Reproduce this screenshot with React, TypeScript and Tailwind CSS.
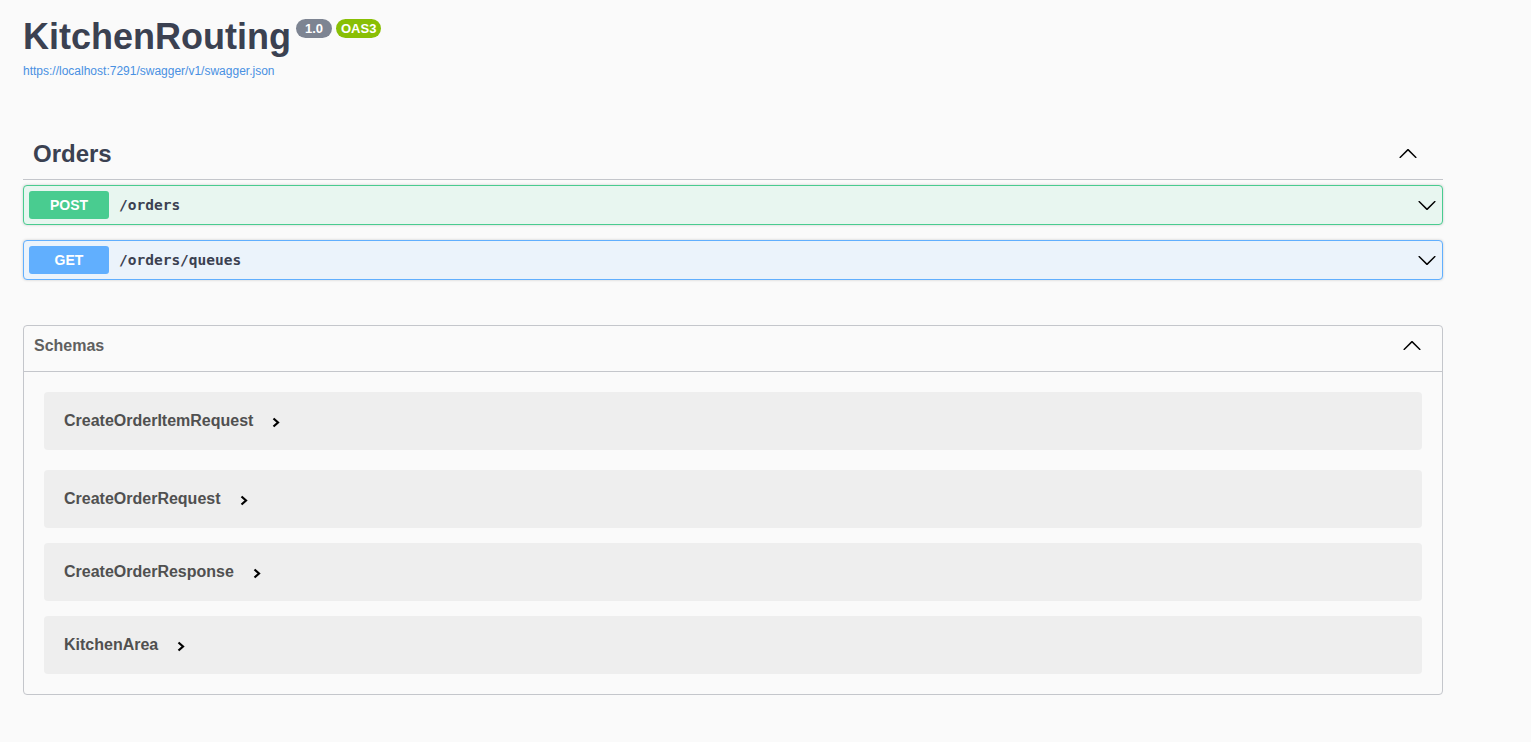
import React from "react";

const ArrowDown = ({ className = "" }: { className?: string }) => (
  <svg viewBox="0 0 20 20" width="20" height="20" className={className} fill="#000">
    <path d="M17.418 6.109c.272-.268.709-.268.979 0s.271.701 0 .969l-7.908 7.83c-.27.268-.707.268-.979 0l-7.908-7.83c-.27-.268-.27-.701 0-.969.271-.268.709-.268.979 0L10 13.25l7.418-7.141z" />
  </svg>
);

const ArrowUp = ({ className = "" }: { className?: string }) => (
  <svg viewBox="0 0 20 20" width="20" height="20" className={className} fill="#000">
    <path
      transform="rotate(180 10 10)"
      d="M17.418 6.109c.272-.268.709-.268.979 0s.271.701 0 .969l-7.908 7.83c-.27.268-.707.268-.979 0l-7.908-7.830c-.27-.268-.27-.701 0-.969.271-.268.709-.268.979 0L10 13.25l7.418-7.141z"
    />
  </svg>
);

const SmallChevron = () => (
  <svg viewBox="0 0 8 11" width="8" height="11" className="shrink-0">
    <polyline points="1.5,1.5 6,5.5 1.5,9.5" fill="none" stroke="#000" strokeWidth="2.2" strokeLinejoin="miter" />
  </svg>
);

function Op({ method, path, kind }: { method: string; path: string; kind: "post" | "get" }) {
  const box =
    kind === "post"
      ? "border-[#49cc90] bg-[#e8f6f0]"
      : "border-[#61affe] bg-[#ebf3fb]";
  const badge = kind === "post" ? "bg-[#49cc90]" : "bg-[#61affe]";
  return (
    <div className={`flex h-[40px] items-center rounded-[4px] border px-[5px] shadow-[0_0_3px_rgba(0,0,0,0.19)] ${box}`}>
      <div className={`flex h-[28px] w-[80px] items-center justify-center rounded-[3px] text-[14px] font-bold text-white ${badge}`}>
        {method}
      </div>
      <div className="ml-[10px] mt-[1px] flex-1 text-[14.5px] font-bold text-[#3b4151]" style={{ fontFamily: '"DejaVu Sans Mono", monospace' }}>
        {path}
      </div>
      <ArrowDown />
    </div>
  );
}

function Model({ name, mb }: { name: string; mb: string }) {
  return (
    <div className={`flex h-[58px] items-center rounded-[4px] bg-[#eeeeee] pl-[20px] ${mb}`}>
      <span className="text-[16px] font-bold text-[#505050]">{name}</span>
      <span className="ml-[19px] mt-[2px] flex">
        <SmallChevron />
      </span>
    </div>
  );
}

export default function App() {
  return (
    <div className="min-h-[742px] w-full bg-[#fafafa] text-[#3b4151]" style={{ fontFamily: '"Liberation Sans", Arial, sans-serif' }}>
      <div className="ml-[23px] w-[1420px]">
        {/* Info */}
        <div className="pt-[17px]">
          <div className="flex items-start">
            <h1 className="text-[36px] font-bold leading-[40px] text-[#3b4151]">KitchenRouting</h1>
            <div className="ml-[5px] mt-[2px] flex items-center gap-[4px]">
              <span className="flex h-[19px] w-[36px] items-center justify-center rounded-full bg-[#7d8492] text-[13px] font-bold text-white">
                1.0
              </span>
              <span className="flex h-[19px] items-center rounded-full bg-[#89bf04] px-[5px] text-[13px] font-bold text-white">
                OAS3
              </span>
            </div>
          </div>
          <div className="mt-[7px] text-[12px] leading-[14px] text-[#4990e2]">
            <a>https://localhost:7291/swagger/v1/swagger.json</a>
          </div>
        </div>

        {/* Orders */}
        <div className="mt-[51px]">
          <div className="flex h-[51px] items-center border-b border-[#c4c6cb] pl-[10px] pr-[25px]">
            <h3 className="flex-1 text-[24px] font-bold text-[#3b4151]">Orders</h3>
            <ArrowUp />
          </div>
          <div className="mt-[5px] flex flex-col gap-[15px]">
            <Op method="POST" path="/orders" kind="post" />
            <Op method="GET" path="/orders/queues" kind="get" />
          </div>
        </div>

        {/* Schemas */}
        <div className="mt-[45px] rounded-[4px] border border-[#c4c6cb]">
          <div className="flex h-[46px] items-center border-b border-[#c4c6cb] pl-[10px] pr-[20px]">
            <h4 className="-mt-[6px] flex-1 text-[16px] font-bold text-[#606060]">Schemas</h4>
            <ArrowUp className="-mt-[5px]" />
          </div>
          <div className="px-[20px] pt-[20px] pb-[20px]">
            <Model name="CreateOrderItemRequest" mb="mb-[20px]" />
            <Model name="CreateOrderRequest" mb="mb-[15px]" />
            <Model name="CreateOrderResponse" mb="mb-[15px]" />
            <Model name="KitchenArea" mb="" />
          </div>
        </div>
      </div>
    </div>
  );
}
